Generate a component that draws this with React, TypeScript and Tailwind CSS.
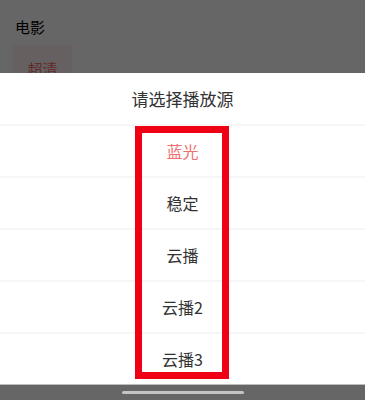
import React from 'react';

const sources = ['蓝光', '稳定', '云播', '云播2', '云播3'];

export default function App() {
  const font = { fontFamily: '"Noto Sans CJK SC", "Noto Sans", sans-serif' };
  return (
    <div className="relative w-full h-[400px] overflow-hidden bg-white" style={font}>
      {/* page underneath */}
      <div className="px-[13px] pt-[16px]">
        <div className="pl-[2px] text-[15px] leading-[22px] text-black">电影</div>
        <div className="mt-[7px] w-[59px] h-[48px] bg-[#fef0f0] text-[#f56c6c] text-[15px] flex items-center justify-center">
          超清
        </div>
      </div>

      {/* mask */}
      <div className="absolute inset-0 bg-black/60" />

      {/* action sheet */}
      <div className="absolute left-0 right-0 top-[73px] bg-white">
        <div className="h-[51px] flex items-center justify-center text-[17px] text-[#333]">请选择播放源</div>
        {sources.map((s, i) => (
          <div
            key={s}
            className={
              'h-[52px] border-t-2 border-[#f6f6f6] flex items-center justify-center text-[16px] ' +
              (i === 0 ? 'text-[#ee6f6f]' : 'text-[#333]')
            }
          >
            {s}
          </div>
        ))}
      </div>

      {/* bottom bar */}
      <div className="absolute left-0 right-0 bottom-0 h-[16px] bg-[#666] border-t border-[#bdbdbd] flex justify-center">
        <div className="mt-[6px] w-[122px] h-[3px] rounded-full bg-[#c4c4c4]" />
      </div>

      {/* annotation box */}
      <div className="absolute left-[135px] top-[126px] w-[94px] h-[253px] border-[7px] border-[#f00014]" />
    </div>
  );
}
